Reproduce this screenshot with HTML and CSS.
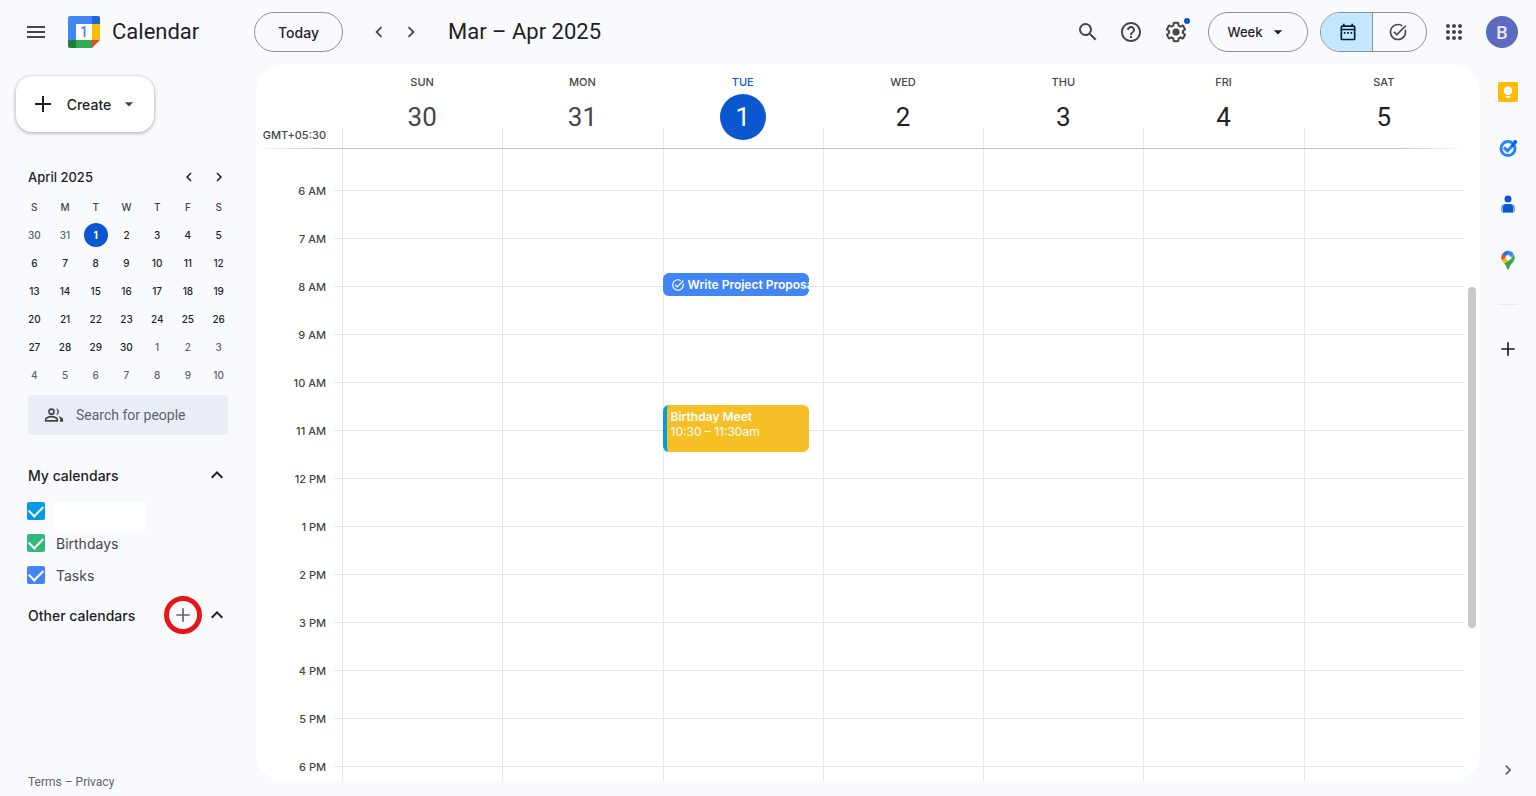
FILE: index.html
```html
<!DOCTYPE html>
<html lang="en">
<head>
    <meta charset="UTF-8">
    <meta name="viewport" content="width=device-width, initial-scale=1.0">
    <title>Calendar</title>
    <link rel="stylesheet" href="styles.css">
</head>
<body>
    <header class="topbar">
        <button class="icon-btn menu-btn" aria-label="Main menu">
            <svg width="24" height="24" viewBox="0 0 24 24"><path d="M3 18h18v-2H3v2zm0-5h18v-2H3v2zm0-7v2h18V6H3z"/></svg>
        </button>
        <a class="brand" href="#">
            <span class="logo">
                <svg width="32" height="32" viewBox="0 0 32 32">
                    <path fill="#4285f4" d="M2 0h22v8H8v16H0V2a2 2 0 0 1 2-2z"/>
                    <path fill="#1967d2" d="M24 0h6a2 2 0 0 1 2 2v6h-8z"/>
                    <path fill="#fbbc04" d="M24 8h8v16h-8z"/>
                    <path fill="#34a853" d="M8 24h16v8H8z"/>
                    <path fill="#188038" d="M0 24h8v8H2a2 2 0 0 1-2-2z"/>
                    <path fill="#ea4335" d="M24 24h8l-8 8z"/>
                    <path fill="#fff" d="M8 8h16v16H8z"/>
                </svg>
                <span class="logo-day">1</span>
            </span>
            <span class="brand-name">Calendar</span>
        </a>
        <button class="pill today">Today</button>
        <div class="arrows">
            <button class="icon-btn" aria-label="Previous week">
                <svg width="22" height="22" viewBox="0 0 24 24"><path d="M15.41 7.41L14 6l-6 6 6 6 1.41-1.41L10.83 12z"/></svg>
            </button>
            <button class="icon-btn" aria-label="Next week">
                <svg width="22" height="22" viewBox="0 0 24 24"><path d="M10 6L8.59 7.41 13.17 12l-4.58 4.59L10 18l6-6z"/></svg>
            </button>
        </div>
        <h1 class="range">Mar – Apr 2025</h1>

        <div class="tools">
            <button class="icon-btn" aria-label="Search">
                <svg width="24" height="24" viewBox="0 0 24 24"><path d="M15.5 14h-.79l-.28-.27A6.47 6.47 0 0 0 16 9.5 6.5 6.5 0 1 0 9.5 16c1.61 0 3.09-.59 4.23-1.57l.27.28v.79l5 4.99L20.49 19l-4.99-5zm-6 0C7.01 14 5 11.99 5 9.5S7.01 5 9.5 5 14 7.01 14 9.5 11.99 14 9.5 14z"/></svg>
            </button>
            <button class="icon-btn help" aria-label="Support">
                <svg width="24" height="24" viewBox="0 0 24 24"><path d="M11 18h2v-2h-2v2zm1-16C6.48 2 2 6.48 2 12s4.48 10 10 10 10-4.48 10-10S17.52 2 12 2zm0 18c-4.41 0-8-3.59-8-8s3.59-8 8-8 8 3.59 8 8-3.59 8-8 8zm0-14c-2.21 0-4 1.79-4 4h2c0-1.1.9-2 2-2s2 .9 2 2c0 2-3 1.75-3 5h2c0-2.25 3-2.5 3-5 0-2.21-1.79-4-4-4z"/></svg>
            </button>
            <button class="icon-btn settings" aria-label="Settings">
                <svg width="24" height="24" viewBox="0 0 24 24"><path d="M13.85 22.25h-3.7c-.74 0-1.36-.54-1.45-1.27l-.27-1.89c-.27-.14-.53-.29-.79-.46l-1.8.72c-.7.26-1.47-.03-1.81-.65L2.2 15.53c-.35-.66-.2-1.44.36-1.88l1.53-1.19c-.01-.15-.02-.3-.02-.46 0-.15.01-.31.02-.46l-1.52-1.19c-.59-.45-.74-1.26-.37-1.88l1.85-3.19c.34-.62 1.11-.9 1.79-.63l1.81.73c.26-.17.52-.32.78-.46l.27-1.91c.09-.7.71-1.25 1.44-1.25h3.7c.74 0 1.36.54 1.45 1.27l.27 1.89c.27.14.53.29.79.46l1.8-.72c.71-.26 1.48.03 1.82.65l1.84 3.18c.36.66.2 1.44-.36 1.88l-1.52 1.19c.01.15.02.3.02.46s-.01.31-.02.46l1.52 1.19c.56.45.72 1.23.37 1.86l-1.86 3.22c-.34.62-1.11.9-1.8.63l-1.8-.72c-.26.17-.52.32-.78.46l-.27 1.91c-.1.68-.72 1.22-1.46 1.22zm-3.23-2h2.76l.37-2.55.53-.22c.44-.18.88-.44 1.34-.78l.45-.34 2.38.96 1.38-2.4-2.03-1.58.07-.56c.03-.26.06-.51.06-.78s-.03-.53-.06-.78l-.07-.56 2.03-1.58-1.39-2.4-2.39.96-.45-.35c-.42-.32-.87-.58-1.33-.77l-.52-.22-.37-2.55h-2.76l-.37 2.55-.53.21c-.44.19-.88.44-1.34.79l-.45.33-2.38-.95-1.39 2.39 2.03 1.58-.07.56a7 7 0 0 0-.06.79c0 .26.02.53.06.78l.07.56-2.03 1.58 1.38 2.4 2.39-.96.45.35c.43.33.86.58 1.33.77l.53.22.38 2.55z"/><circle cx="12" cy="12" r="3.5"/></svg>
                <span class="dot"></span>
            </button>
            <button class="pill view">Week
                <svg width="20" height="20" viewBox="0 0 24 24"><path d="M7 10l5 5 5-5z"/></svg>
            </button>
            <div class="switch">
                <button class="switch-btn active" aria-label="Calendar">
                    <svg width="20" height="20" viewBox="0 0 24 24"><path d="M19 4h-1V2h-2v2H8V2H6v2H5a2 2 0 0 0-2 2v14c0 1.1.9 2 2 2h14c1.1 0 2-.9 2-2V6a2 2 0 0 0-2-2zm0 16H5V10h14v10zm0-12H5V6h14v2zM7 12h2v2H7zm4 0h2v2h-2zm4 0h2v2h-2z"/></svg>
                </button>
                <button class="switch-btn" aria-label="Tasks">
                    <svg width="20" height="20" viewBox="0 0 24 24"><path d="M22 5.18L10.59 16.6l-4.24-4.24 1.41-1.41 2.83 2.83 10-10L22 5.18zm-2.21 5.04c.13.57.21 1.17.21 1.78 0 4.42-3.58 8-8 8s-8-3.58-8-8 3.58-8 8-8c1.58 0 3.04.46 4.28 1.25l1.44-1.44A9.9 9.9 0 0 0 12 2C6.48 2 2 6.48 2 12s4.48 10 10 10 10-4.48 10-10c0-1.19-.22-2.33-.6-3.39l-1.61 1.61z"/></svg>
                </button>
            </div>
            <button class="icon-btn apps" aria-label="Google apps">
                <svg width="24" height="24" viewBox="0 0 24 24"><path d="M6 8c1.1 0 2-.9 2-2s-.9-2-2-2-2 .9-2 2 .9 2 2 2zm6 12c1.1 0 2-.9 2-2s-.9-2-2-2-2 .9-2 2 .9 2 2 2zm-6 0c1.1 0 2-.9 2-2s-.9-2-2-2-2 .9-2 2 .9 2 2 2zm0-6c1.1 0 2-.9 2-2s-.9-2-2-2-2 .9-2 2 .9 2 2 2zm6 0c1.1 0 2-.9 2-2s-.9-2-2-2-2 .9-2 2 .9 2 2 2zm4-8c0 1.1.9 2 2 2s2-.9 2-2-.9-2-2-2-2 .9-2 2zm-4 2c1.1 0 2-.9 2-2s-.9-2-2-2-2 .9-2 2 .9 2 2 2zm6 6c1.1 0 2-.9 2-2s-.9-2-2-2-2 .9-2 2 .9 2 2 2zm0 6c1.1 0 2-.9 2-2s-.9-2-2-2-2 .9-2 2 .9 2 2 2z"/></svg>
            </button>
            <button class="avatar" aria-label="Account">B</button>
        </div>
    </header>

    <div class="layout">
        <aside class="sidebar">
            <button class="create">
                <svg width="24" height="24" viewBox="0 0 24 24"><path d="M20 13h-7v7h-2v-7H4v-2h7V4h2v7h7z"/></svg>
                <span>Create</span>
                <svg width="20" height="20" viewBox="0 0 24 24"><path d="M7 10l5 5 5-5z"/></svg>
            </button>

            <div class="month-head">
                <h2>April 2025</h2>
                <button class="mini-btn" aria-label="Previous month">
                    <svg width="18" height="18" viewBox="0 0 24 24"><path d="M15.41 7.41L14 6l-6 6 6 6 1.41-1.41L10.83 12z"/></svg>
                </button>
                <button class="mini-btn" aria-label="Next month">
                    <svg width="18" height="18" viewBox="0 0 24 24"><path d="M10 6L8.59 7.41 13.17 12l-4.58 4.59L10 18l6-6z"/></svg>
                </button>
            </div>
            <table class="month">
                <thead>
                    <tr><th>S</th><th>M</th><th>T</th><th>W</th><th>T</th><th>F</th><th>S</th></tr>
                </thead>
                <tbody>
                    <tr><td class="out">30</td><td class="out">31</td><td><span class="now">1</span></td><td>2</td><td>3</td><td>4</td><td>5</td></tr>
                    <tr><td>6</td><td>7</td><td>8</td><td>9</td><td>10</td><td>11</td><td>12</td></tr>
                    <tr><td>13</td><td>14</td><td>15</td><td>16</td><td>17</td><td>18</td><td>19</td></tr>
                    <tr><td>20</td><td>21</td><td>22</td><td>23</td><td>24</td><td>25</td><td>26</td></tr>
                    <tr><td>27</td><td>28</td><td>29</td><td>30</td><td class="out">1</td><td class="out">2</td><td class="out">3</td></tr>
                    <tr><td class="out">4</td><td class="out">5</td><td class="out">6</td><td class="out">7</td><td class="out">8</td><td class="out">9</td><td class="out">10</td></tr>
                </tbody>
            </table>

            <label class="people">
                <svg width="20" height="20" viewBox="0 0 24 24"><path d="M9 12a4 4 0 1 0 0-8 4 4 0 0 0 0 8zm0-6a2 2 0 1 1 0 4 2 2 0 0 1 0-4zm0 7c-3 0-8 1.5-8 4.5V20h16v-2.5C17 14.5 12 13 9 13zm6 5H3v-.5c0-1 3-2.5 6-2.5s6 1.5 6 2.5v.5zm-.5-6.05A4 4 0 0 0 14.5 4.05a6 6 0 0 1 0 7.9zM17.5 13.5c1 .9 1.7 2.2 1.7 4V20H23v-2.5c0-2.1-2.7-3.5-5.5-4z"/></svg>
                <input type="text" placeholder="Search for people" aria-label="Search for people">
            </label>

            <div class="section-head">
                <h2>My calendars</h2>
                <button class="mini-btn" aria-label="Collapse my calendars">
                    <svg width="24" height="24" viewBox="0 0 24 24"><path d="M12 8l-6 6 1.41 1.41L12 10.83l4.59 4.58L18 14z"/></svg>
                </button>
            </div>
            <ul class="calendars">
                <li class="hidden-name">
                    <input type="checkbox" class="check own" id="cal-own" checked>
                    <label for="cal-own" class="blank" aria-label="Own calendar"></label>
                </li>
                <li>
                    <input type="checkbox" class="check birthdays" id="cal-birthdays" checked>
                    <label for="cal-birthdays">Birthdays</label>
                </li>
                <li>
                    <input type="checkbox" class="check tasks" id="cal-tasks" checked>
                    <label for="cal-tasks">Tasks</label>
                </li>
            </ul>
            <div class="section-head other">
                <h2>Other calendars</h2>
                <button class="add" aria-label="Add other calendars">
                    <svg width="20" height="20" viewBox="0 0 24 24"><path d="M20 13h-7v7h-2v-7H4v-2h7V4h2v7h7z"/></svg>
                </button>
                <button class="mini-btn" aria-label="Collapse other calendars">
                    <svg width="24" height="24" viewBox="0 0 24 24"><path d="M12 8l-6 6 1.41 1.41L12 10.83l4.59 4.58L18 14z"/></svg>
                </button>
            </div>
            <div class="legal"><a href="#">Terms</a> – <a href="#">Privacy</a></div>
        </aside>

        <main class="week">
            <div class="week-head">
                <div class="zone">GMT+05:30</div>
                <div class="day-names">
                    <div class="day-name"><span>SUN</span><b>30</b></div>
                    <div class="day-name"><span>MON</span><b>31</b></div>
                    <div class="day-name today-name"><span>TUE</span><b>1</b></div>
                    <div class="day-name next"><span>WED</span><b>2</b></div>
                    <div class="day-name next"><span>THU</span><b>3</b></div>
                    <div class="day-name next"><span>FRI</span><b>4</b></div>
                    <div class="day-name next"><span>SAT</span><b>5</b></div>
                </div>
            </div>
            <div class="week-body">
                <ul class="hours">
                    <li>6 AM</li>
                    <li>7 AM</li>
                    <li>8 AM</li>
                    <li>9 AM</li>
                    <li>10 AM</li>
                    <li>11 AM</li>
                    <li>12 PM</li>
                    <li>1 PM</li>
                    <li>2 PM</li>
                    <li>3 PM</li>
                    <li>4 PM</li>
                    <li>5 PM</li>
                    <li>6 PM</li>
                </ul>
                <div class="days">
                    <div class="day"></div>
                    <div class="day"></div>
                    <div class="day">
                        <button class="event task">
                            <svg width="14" height="14" viewBox="0 0 24 24"><path d="M22 5.18L10.59 16.6l-4.24-4.24 1.41-1.41 2.83 2.83 10-10L22 5.18zm-2.21 5.04c.13.57.21 1.17.21 1.78 0 4.42-3.58 8-8 8s-8-3.58-8-8 3.58-8 8-8c1.58 0 3.04.46 4.28 1.25l1.44-1.44A9.9 9.9 0 0 0 12 2C6.48 2 2 6.48 2 12s4.48 10 10 10 10-4.48 10-10c0-1.19-.22-2.33-.6-3.39l-1.61 1.61z"/></svg>
                            <span>Write Project Proposal</span>
                        </button>
                        <button class="event meet">
                            <strong>Birthday Meet</strong>
                            <span>10:30 – 11:30am</span>
                        </button>
                    </div>
                    <div class="day"></div>
                    <div class="day"></div>
                    <div class="day"></div>
                    <div class="day"></div>
                </div>
                <div class="scroll"><div class="thumb"></div></div>
            </div>
        </main>

        <nav class="rail">
            <button class="rail-btn" aria-label="Keep">
                <svg width="20" height="20" viewBox="0 0 20 20"><rect width="20" height="20" rx="2" fill="#fbbc04"/><path fill="#fff" d="M10 4.5a4.300 4.300 0 0 0-2.300 7.900V13h4.600v-.6A4.300 4.300 0 0 0 10 4.500zM7.700 14h4.600v1.800H7.700z"/></svg>
            </button>
            <button class="rail-btn" aria-label="Tasks">
                <svg width="20" height="20" viewBox="0 0 20 20"><circle cx="10" cy="10.5" r="7" fill="none" stroke="#2684fc" stroke-width="3"/><path fill="none" stroke="#2684fc" stroke-width="3" d="M6 9.5l3.4 3.4 4.5-4.7"/><path stroke="#0066da" stroke-width="3" d="M13.5 8.5l3.5-3.7"/><circle cx="17.2" cy="4" r="2" fill="#0066da"/></svg>
            </button>
            <button class="rail-btn" aria-label="Contacts">
                <svg width="20" height="20" viewBox="0 0 20 20"><circle cx="10" cy="5" r="3.5" fill="#0957d0"/><path fill="#7baaf7" d="M7 10h6a4 4 0 0 1 4 4v2.500a2 2 0 0 1-2 2H5a2 2 0 0 1-2-2V14a4 4 0 0 1 4-4z"/><path fill="#0957d0" d="M8.500 10h3a3.500 3.500 0 0 1 3.500 3.500v5H5v-5A3.500 3.500 0 0 1 8.500 10z"/></svg>
            </button>
            <button class="rail-btn" aria-label="Maps">
                <svg width="20" height="20" viewBox="0 0 20 20">
                    <path fill="#34a853" d="M15.7 4.2A6.7 6.7 0 0 1 16.7 7.5c0 4.6-4.7 6.5-5.7 11-.3 1.3-1.7 1.3-2 0-.5-2-1.7-3.7-2.9-5.1l6.6-4z"/>
                    <path fill="#fbbc04" d="M4 10.6l4-4.5 4.5 3.3-6.4 4.1A17 17 0 0 1 4 10.6z"/>
                    <path fill="#ea4335" d="M4.7 3.6L8.5 6.5 4 10.6a7 7 0 0 1 .7-7z"/>
                    <path fill="#1a73e8" d="M4.7 3.6A6.7 6.7 0 0 1 12 1.1L8 6.5z"/>
                    <path fill="#4285f4" d="M12 1.1a6.7 6.7 0 0 1 3.7 3.1L11.5 9 8 6.2z"/>
                    <circle cx="10" cy="7.4" r="2.5" fill="#fff"/>
                </svg>
            </button>
            <hr>
            <button class="rail-btn plus" aria-label="Get add-ons">
                <svg width="20" height="20" viewBox="0 0 24 24"><path d="M20 13h-7v7h-2v-7H4v-2h7V4h2v7h7z"/></svg>
            </button>
            <button class="rail-btn hide" aria-label="Hide side panel">
                <svg width="20" height="20" viewBox="0 0 24 24"><path d="M10 6L8.59 7.41 13.17 12l-4.58 4.59L10 18l6-6z"/></svg>
            </button>
        </nav>
    </div>
</body>
</html>
```

FILE: styles.css
```css
* {
    box-sizing: border-box;
}
body {
    display: flex;
    flex-direction: column;
    height: 100vh;
    margin: 0;
    overflow: hidden;
    background-color: #f8fafd;
    color: #1f1f1f;
    font-family: Inter, "Liberation Sans", sans-serif;
    font-size: 14px;
}
button {
    display: flex;
    align-items: center;
    justify-content: center;
    padding: 0;
    border: none;
    background: none;
    color: #1f1f1f;
    font: inherit;
    cursor: pointer;
}
svg {
    display: block;
    flex: none;
    fill: currentColor;
}
h1, h2 {
    margin: 0;
    font-weight: 400;
}
ul {
    margin: 0;
    padding: 0;
    list-style: none;
}
a {
    color: inherit;
    text-decoration: none;
}

/* Top bar */
.topbar {
    display: flex;
    align-items: center;
    flex: none;
    height: 64px;
    padding: 0 18px 0 16px;
}
.icon-btn {
    width: 40px;
    height: 40px;
    color: #444746;
}
.brand {
    display: flex;
    align-items: center;
    gap: 12px;
    width: 186px;
    margin-left: 12px;
}
.logo {
    position: relative;
}
.logo-day {
    position: absolute;
    inset: 0;
    color: #4285f4;
    font-family: Roboto, sans-serif;
    font-size: 14px;
    font-weight: 500;
    line-height: 32px;
    text-align: center;
}
.brand-name, .range {
    font-family: Roboto, sans-serif;
    font-size: 22px;
    line-height: 32px;
}
.pill {
    height: 40px;
    border: 1px solid #8e918f;
    border-radius: 20px;
    font-size: 13px;
    font-weight: 500;
}
.today {
    width: 89px;
    font-size: 14px;
}
.arrows {
    display: flex;
    margin-left: 20px;
}
.arrows .icon-btn {
    width: 32px;
}
.range {
    margin-left: 21px;
}
.tools {
    display: flex;
    align-items: center;
    margin-left: auto;
}
.tools .icon-btn {
    width: 44px;
}
.tools .help {
    padding-right: 3px;
}
.settings {
    position: relative;
}
.dot {
    position: absolute;
    top: 6px;
    right: 8px;
    width: 6px;
    height: 6px;
    border-radius: 50%;
    background-color: #0b57d0;
}
.view {
    gap: 6px;
    width: 100px;
    margin-left: 10px;
}
.switch {
    display: flex;
    width: 107px;
    height: 40px;
    margin-left: 12px;
    overflow: hidden;
    border: 1px solid #8e918f;
    border-radius: 20px;
}
.switch-btn {
    flex: 1;
    padding-right: 4px;
    color: #444746;
}
.switch-btn.active {
    padding: 0 0 0 2px;
    border-right: 1px solid #8e918f;
    background-color: #c2e7ff;
    color: #001d35;
}
.tools .apps {
    margin: 0 10px 0 5px;
}
.avatar {
    width: 32px;
    height: 32px;
    border-radius: 50%;
    background-color: #5c6bc0;
    color: #e8eaf6;
    font-family: Roboto, sans-serif;
    font-size: 18px;
    font-weight: 500;
}

.layout {
    display: flex;
    flex: 1;
    min-height: 0;
}

/* Left column */
.sidebar {
    display: flex;
    flex-direction: column;
    flex: none;
    width: 256px;
    padding: 12px 28px 6px;
}
.create {
    gap: 12px;
    align-self: flex-start;
    flex: none;
    width: 138px;
    height: 56px;
    margin-left: -12px;
    border-radius: 16px;
    background-color: #fff;
    box-shadow: 0 1px 3px 1px rgba(60, 64, 67, 0.3);
    font-size: 14px;
    font-weight: 500;
}
.create svg:last-child {
    margin-left: -4px;
    color: #444746;
}
.month-head {
    display: flex;
    align-items: center;
    height: 32px;
    margin: 29px -6px 0 0;
}
.month-head h2, .section-head h2 {
    flex: 1;
    font-size: 14px;
    font-weight: 500;
}
.month-head h2 {
    font-size: 13px;
}
.mini-btn {
    width: 30px;
    height: 30px;
}
.month {
    flex: none;
    width: 215px;
    margin-left: -9px;
    border-collapse: collapse;
    table-layout: fixed;
    font-size: 10px;
    font-weight: 500;
    text-align: center;
}
.month th {
    height: 28px;
    padding: 0;
    color: #444746;
    font-weight: 500;
}
.month td {
    height: 28px;
    padding: 0;
}
.month .out {
    color: #5f6368;
}
.now {
    display: block;
    width: 24px;
    margin: 0 auto;
    border-radius: 50%;
    background-color: #0b57d0;
    color: #fff;
    font-weight: 700;
    line-height: 24px;
}
.people {
    display: flex;
    align-items: center;
    gap: 12px;
    flex: none;
    height: 40px;
    margin-top: 6px;
    padding: 0 16px;
    border-radius: 4px;
    background-color: #e9eef6;
    color: #444746;
}
.people input {
    flex: 1;
    width: 100%;
    min-width: 0;
    padding: 0;
    border: none;
    outline: none;
    background: none;
    font-family: Roboto, sans-serif;
    font-size: 14px;
}
.people input::placeholder {
    color: #5f6368;
    opacity: 1;
}
.section-head {
    display: flex;
    align-items: center;
    flex: none;
    height: 40px;
    margin: 20px -4px 0 0;
}
.section-head.other {
    margin-top: 4px;
}
.calendars li {
    display: flex;
    align-items: center;
    gap: 11px;
    height: 32px;
    color: #444746;
}
.calendars .hidden-name {
    align-items: flex-start;
    gap: 8px;
    padding-top: 7px;
}
.blank {
    width: 92px;
    height: 29px;
    background-color: #fff;
}
.check {
    appearance: none;
    display: grid;
    place-items: center;
    flex: none;
    width: 18px;
    height: 18px;
    margin: 0 0 0 -1px;
    border-radius: 2px;
}
.check:checked::after {
    content: "";
    width: 12px;
    height: 7px;
    margin-bottom: 3px;
    border: solid #fff;
    border-width: 0 0 2px 2px;
    transform: rotate(-45deg);
}
.own {
    background-color: #039be5;
}
.birthdays {
    background-color: #33b679;
}
.tasks {
    background-color: #4285f4;
}
.add {
    width: 38px;
    height: 38px;
    border: 5px solid #e51519;
    border-radius: 50%;
    color: #5f6368;
}
.legal {
    margin-top: auto;
    color: #5f6368;
    font-family: Roboto, sans-serif;
    font-size: 12px;
    line-height: 16px;
}

/* Week view */
.week {
    display: flex;
    flex-direction: column;
    flex: 1;
    margin-bottom: 15px;
    overflow: hidden;
    border-radius: 28px;
    background-color: #fff;
}
.week-head {
    display: flex;
    flex: none;
    height: 85px;
    padding-right: 16px;
    background: linear-gradient(to right, #fff, #c4c7c5 60px, #c4c7c5 calc(100% - 60px), #fff) bottom left / calc(100% - 16px) 1px no-repeat;
}
.zone {
    align-self: flex-end;
    width: 86px;
    padding: 0 16px 6px 0;
    color: #444746;
    font-size: 11px;
    font-weight: 500;
    line-height: 16px;
    text-align: right;
}
.day-names {
    display: grid;
    grid-template-columns: repeat(7, 1fr);
    flex: 1;
}
.day-name {
    display: flex;
    flex-direction: column;
    align-items: center;
    padding-top: 10px;
    background: linear-gradient(#e4e7ee, #e4e7ee) left bottom 1px / 1px 20px no-repeat;
    color: #444746;
}
.day-name span {
    font-size: 11px;
    font-weight: 500;
    line-height: 16px;
}
.day-name b {
    width: 46px;
    margin-top: 4px;
    border-radius: 50%;
    font-family: Roboto, sans-serif;
    font-size: 26px;
    font-weight: 400;
    line-height: 46px;
    text-align: center;
}
.next b {
    color: #1f1f1f;
}
.today-name span {
    color: #0b57d0;
}
.today-name b {
    background-color: #0b57d0;
    color: #fff;
}
.week-body {
    display: flex;
    flex: 1;
    min-height: 0;
}
.hours {
    width: 78px;
    padding: 18px 8px 0 0;
    color: #444746;
    font-size: 11px;
    font-weight: 500;
    line-height: 48px;
    text-align: right;
}
.days {
    display: grid;
    grid-template-columns: repeat(7, 1fr);
    flex: 1;
    padding-left: 8px;
    background: linear-gradient(#e4e7ee 1px, transparent 1px) 0 41px / 100% 48px;
}
.day {
    position: relative;
    min-width: 0;
    border-left: 1px solid #e4e7ee;
}
.event {
    position: absolute;
    left: -1px;
    width: 92%;
    overflow: hidden;
    border-radius: 6px;
    color: #fff;
    font-size: 12px;
    line-height: 15px;
    white-space: nowrap;
}
.task {
    top: 124px;
    justify-content: flex-start;
    gap: 3px;
    height: 23px;
    padding-left: 8px;
    background-color: #4285f4;
    font-weight: 600;
}
.meet {
    top: 256px;
    flex-direction: column;
    align-items: flex-start;
    justify-content: flex-start;
    height: 47px;
    padding: 4px 0 0 4px;
    border-left: 4px solid #039be5;
    background-color: #f6bf26;
}
.meet strong {
    font-weight: 600;
}
.scroll {
    width: 16px;
    padding: 138px 4px 0;
}
.thumb {
    width: 8px;
    height: 69%;
    border-radius: 4px;
    background-color: #c7c7c7;
}

/* Side panel */
.rail {
    display: flex;
    flex-direction: column;
    align-items: center;
    flex: none;
    width: 56px;
    padding-bottom: 6px;
}
.rail-btn {
    flex: none;
    width: 40px;
    height: 56px;
}
.rail hr {
    width: 20px;
    margin: 16px 0;
    border: none;
    border-top: 1px solid #e9ecf1;
}
.rail .hide {
    height: 40px;
    margin-top: auto;
    color: #5f6368;
}
```
